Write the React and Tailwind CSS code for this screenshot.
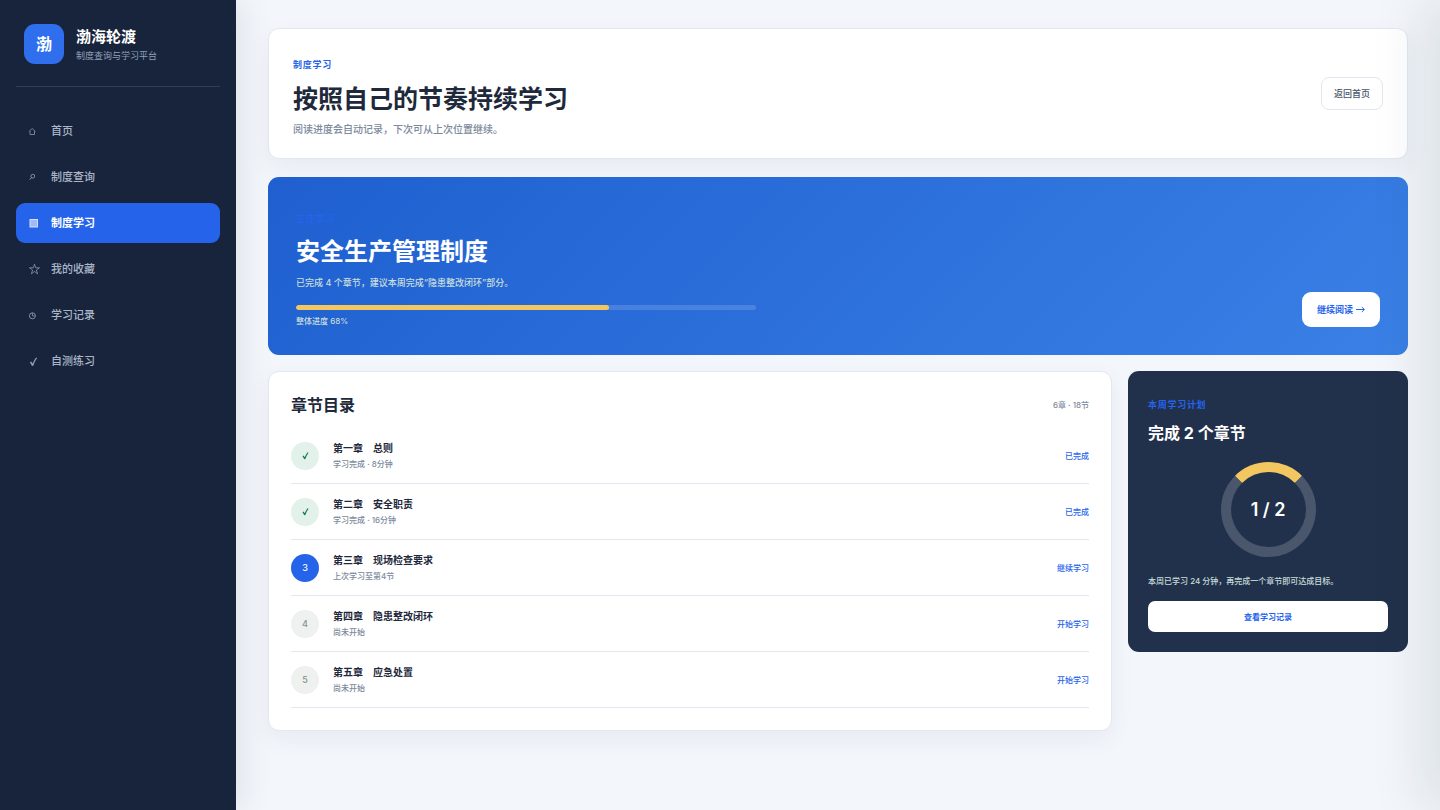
function Check({ className }) {
  return (
    <svg viewBox="0 0 12 12" fill="currentColor" className={className} aria-hidden="true">
      <path d="M2 6.9 3.6 6 5 8.2C6 5.6 7.2 3.4 8.8 1.6L10 2.2C8.2 4.6 6.8 7.4 5.8 10.6L4.4 11Z" />
    </svg>
  );
}

function Glyph({ children }) {
  return (
    <svg viewBox="0 0 12 12" fill="none" stroke="currentColor" className="size-3" aria-hidden="true">
      {children}
    </svg>
  );
}

const NAV = [
  { icon: <Glyph><path d="M1.2 6.4 4.2 3.4 7.2 6.4M2 5.8V9.5H6.5V5.8" strokeWidth="0.8" /></Glyph>, label: '首页' },
  { icon: <Glyph><circle cx="4.8" cy="5.2" r="1.9" strokeWidth="0.9" /><path d="M3.5 6.6 1.8 8.6" strokeWidth="1" /></Glyph>, label: '制度查询' },
  {
    icon: <Glyph><rect x="2" y="2.5" width="7.5" height="7.5" fill="currentColor" fillOpacity="0.7" /></Glyph>,
    label: '制度学习',
    active: true,
  },
  { icon: <Glyph><path d="M6.5 1.2 7.7 4.8H11.5L8.4 7 9.6 10.8 6.5 8.5 3.4 10.8 4.6 7 1.5 4.8H5.3Z" strokeWidth="0.8" /></Glyph>, label: '我的收藏' },
  { icon: <Glyph><circle cx="4.4" cy="6.8" r="3" strokeWidth="0.9" /><path d="M4.4 4V6.9H7.2" strokeWidth="0.8" /></Glyph>, label: '学习记录' },
  { icon: <Check className="size-[11px]" />, label: '自测练习' },
];

const CHAPTERS = [
  { title: '第一章　总则', meta: '学习完成 · 8分钟', action: '已完成', state: 'done' },
  { title: '第二章　安全职责', meta: '学习完成 · 16分钟', action: '已完成', state: 'done' },
  { title: '第三章　现场检查要求', meta: '上次学习至第4节', action: '继续学习', state: 'current' },
  { title: '第四章　隐患整改闭环', meta: '尚未开始', action: '开始学习', state: 'todo' },
  { title: '第五章　应急处置', meta: '尚未开始', action: '开始学习', state: 'todo' },
];

const BADGE = {
  done: 'bg-[#e2f2eb] text-[#16785a]',
  current: 'bg-[#2563eb] text-white',
  todo: 'bg-[#eef1ef] text-[#87928d]',
};

function Eyebrow({ children }) {
  return <p className="text-[9px] leading-4 font-bold tracking-[0.08em] text-[#2563eb]">{children}</p>;
}

function Sidebar() {
  return (
    <aside className="w-[236px] shrink-0 bg-[#18243b] px-4 pt-6 shadow-[8px_0_30px_rgba(15,23,42,0.08)]">
      <div className="flex items-center gap-3 border-b border-white/12 px-2 pb-[22px]">
        <div className="grid size-10 place-items-center rounded-[11px] bg-[#2f6fed] text-base font-bold text-white">渤</div>
        <div className="pt-0.5">
          <strong className="block text-[15px] leading-[22px] font-bold text-white">渤海轮渡</strong>
          <span className="block text-[9px] leading-4 text-[#8fa0ba]">制度查询与学习平台</span>
        </div>
      </div>
      <nav className="mt-6 flex flex-col gap-1.5">
        {NAV.map(({ icon, label, active }) => (
          <a
            key={label}
            href="#"
            className={`flex h-10 items-center rounded-[9px] px-3 text-[11px] ${active ? 'bg-[#2563eb] font-bold text-white' : 'font-medium text-[#aab6c8]'}`}
          >
            <span className="w-[23px] opacity-80">{icon}</span>
            {label}
          </a>
        ))}
      </nav>
    </aside>
  );
}

function PageHeader() {
  return (
    <header className="mb-[18px] flex items-center justify-between rounded-[11px] border border-[#e2e8f0] bg-white px-6 py-6 shadow-[0_8px_24px_rgba(30,50,90,0.06)]">
      <div className="pt-1">
        <Eyebrow>制度学习</Eyebrow>
        <h1 className="mt-2 text-[25px] leading-9 font-bold text-[#1e293b]">按照自己的节奏持续学习</h1>
        <p className="mt-1 -mb-[3px] text-[10px] leading-4 font-medium text-[#7b899c]">阅读进度会自动记录，下次可从上次位置继续。</p>
      </div>
      <button className="h-[33px] rounded-lg border border-[#e2e8f0] bg-white px-3 text-[9px] font-medium text-[#475569]">返回首页</button>
    </header>
  );
}

function CurrentCourse() {
  return (
    <section className="mb-4 flex items-end justify-between rounded-[11px] bg-linear-135 from-[#1f5fd0] to-[#3a80e6] px-7 pt-[34px] pb-7">
      <div className="w-[460px]">
        <Eyebrow>正在学习</Eyebrow>
        <h2 className="mt-2 text-2xl leading-[34px] font-bold text-white">安全生产管理制度</h2>
        <p className="mt-1.5 text-[9px] leading-4 font-medium text-[#c8dedb]">已完成 4 个章节，建议本周完成“隐患整改闭环”部分。</p>
        <div className="mt-3.5 h-[5px] overflow-hidden rounded-full bg-white/15">
          <div className="h-full w-[68%] rounded-full bg-[#f3c75f]" />
        </div>
        <p className="mt-[5px] text-[8px] leading-3 font-medium text-[#c8dedb]">整体进度 68%</p>
      </div>
      <button className="flex h-[35px] items-center gap-[3px] rounded-[9px] bg-white px-[15px] text-[9px] font-bold text-[#2563eb]">
        继续阅读
        <svg viewBox="0 0 9 9" fill="none" stroke="currentColor" className="size-[9px]" aria-hidden="true">
          <path d="M0 4.5H8.3M5.8 2 8.4 4.5 5.8 7" />
        </svg>
      </button>
    </section>
  );
}

function ChapterList() {
  return (
    <section className="min-w-0 flex-1 rounded-[11px] border border-[#e2e8f0] bg-white p-[22px] shadow-[0_8px_24px_rgba(30,50,90,0.06)]">
      <div className="mb-3 flex items-center justify-between">
        <h2 className="text-base leading-[22px] font-bold text-[#1e293b]">章节目录</h2>
        <span className="text-[8px] font-medium text-[#7b899c]">6章 · 18节</span>
      </div>
      <ul>
        {CHAPTERS.map(({ title, meta, action, state }, i) => (
          <li key={title} className="flex h-14 items-center gap-3.5 border-b border-[#e2e8f0]">
            <span className={`grid size-7 place-items-center rounded-full text-[9px] font-medium ${BADGE[state]}`}>
              {state === 'done' ? <Check className="size-[9px]" /> : i + 1}
            </span>
            <div className="flex-1">
              <h3 className="text-[10px] leading-4 font-bold text-[#1e293b]">{title}</h3>
              <p className="text-[8px] leading-4 font-medium text-[#7b899c]">{meta}</p>
            </div>
            <button className="text-[8px] leading-4 font-medium text-[#2563eb]">{action}</button>
          </li>
        ))}
      </ul>
    </section>
  );
}

function WeeklyPlan() {
  return (
    <aside className="w-[280px] shrink-0 rounded-[11px] bg-[#22314b] px-5 pt-[26px] pb-5">
      <Eyebrow>本周学习计划</Eyebrow>
      <h2 className="mt-2 text-base leading-6 font-bold text-white">完成 2 个章节</h2>
      <div className="mx-auto mt-[17px] grid size-[95px] place-items-center rounded-full border-10 border-[#4a566c] border-t-[#f3c75f] text-lg font-semibold text-white">
        1 / 2
      </div>
      <p className="mt-4 text-[8px] leading-4 font-medium text-[#c8dedb]">本周已学习 24 分钟，再完成一个章节即可达成目标。</p>
      <button className="mt-3 h-[31px] w-full rounded-[7px] bg-white text-[8px] leading-4 font-bold text-[#2563eb]">查看学习记录</button>
    </aside>
  );
}

export default function App() {
  return (
    <div className="flex min-h-screen bg-[#f3f6fb] font-['Inter','Noto_Sans_CJK_SC',sans-serif]">
      <Sidebar />
      <main className="min-w-0 flex-1 px-8 py-7">
        <PageHeader />
        <CurrentCourse />
        <div className="flex items-start gap-4">
          <ChapterList />
          <WeeklyPlan />
        </div>
      </main>
      <div className="pointer-events-none fixed inset-y-0 left-full w-80 shadow-[-18px_0_50px_rgba(20,50,35,0.10)]" />
    </div>
  );
}
